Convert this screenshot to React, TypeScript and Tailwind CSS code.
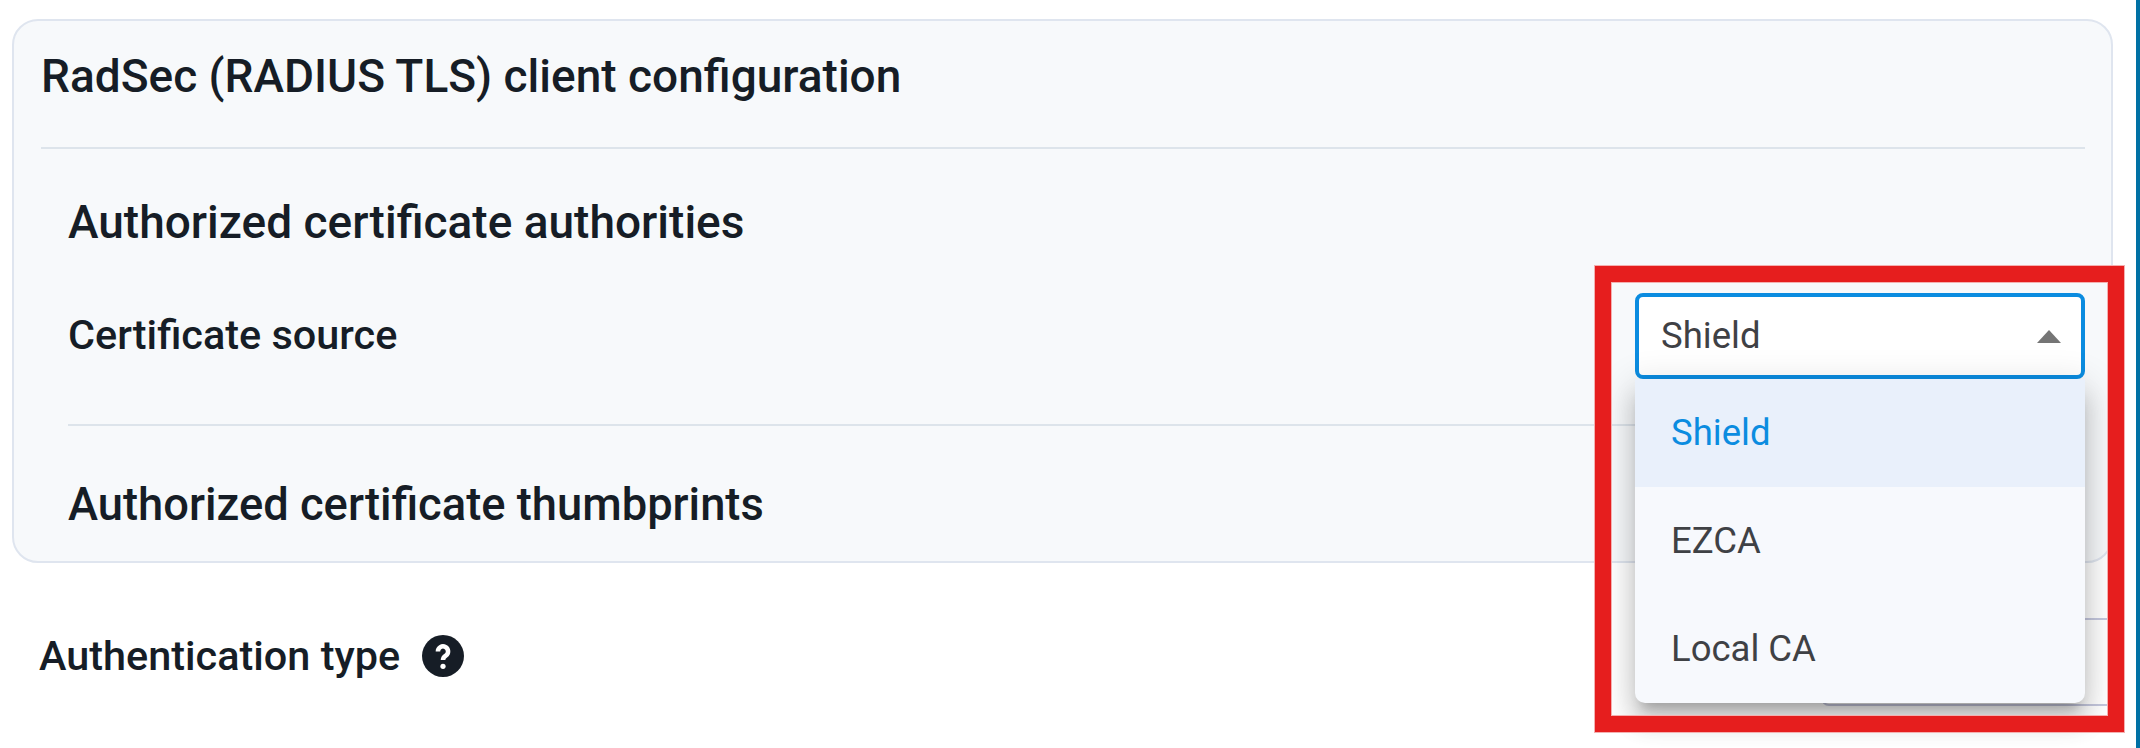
const options = ['Shield', 'EZCA', 'Local CA']

// Open source dropdown, lies over the rows below it
function SourceMenu() {
  return (
    <ul className="absolute left-0 top-full z-20 w-[450px] overflow-hidden rounded-b-[10px] bg-[#f7f9fd] text-[36.5px] text-[#3f4145] shadow-[0_12px_12px_-7px_rgba(0,0,0,0.2),0_20px_25px_2px_rgba(0,0,0,0.14),0_7px_35px_5px_rgba(0,0,0,0.12)]">
      {options.map((option, i) => (
        <li
          key={option}
          className={`flex h-[108px] items-center pl-[36px] ${i === 0 ? 'bg-[#e9f0fb] text-[#0b8ce0]' : ''}`}
        >
          {option}
        </li>
      ))}
    </ul>
  )
}

function HelpIcon() {
  return (
    <svg width="42" height="42" viewBox="0 0 24 24" className="shrink-0">
      <circle cx="12" cy="12" r="12" fill="#161d26" />
      <path
        d="M9.1 9.4a2.9 2.9 0 1 1 4.5 2.4c-1.1.7-1.6 1.2-1.6 2.5"
        fill="none"
        stroke="#fff"
        strokeWidth="2.6"
      />
      <circle cx="12" cy="17.9" r="1.5" fill="#fff" />
    </svg>
  )
}

export default function App() {
  return (
    <div className="flex h-[748px] w-full overflow-hidden bg-white font-['Roboto',sans-serif] text-[#161d26]">
      <main className="relative flex-1 pl-[12px] pr-[23px] pt-[19px]">
        <section className="h-[544px] rounded-[26px] border-2 border-[#dfe5ef] bg-[#f7f9fb] px-[27px] pr-[26px]">
          <div className="flex h-[128px] items-center border-b-2 border-[#dde4eb] pb-[16px]">
            <h2 className="text-[46px] font-medium">RadSec (RADIUS TLS) client configuration</h2>
          </div>
          <div className="pl-[27px]">
            <div className="border-b-2 border-[#dde4eb]">
              <h3 className="flex h-[106px] items-center pt-[40px] text-[46px] font-medium">
                Authorized certificate authorities
              </h3>
              <div className="flex items-center justify-between pt-[38px] pb-[45px]">
                <label className="pb-[2px] text-[41.4px] font-medium">Certificate source</label>
                <div className="relative w-[450px]">
                  <div className="flex h-[86px] items-center justify-between rounded-[8px] border-[4px] border-[#0b8ce0] bg-white pl-[22px] pr-[20px] text-[36.5px] text-[#3f4145]">
                    <span>Shield</span>
                    <svg width="24" height="13" viewBox="0 0 24 13" className="fill-[#757575]">
                      <path d="M12 0 24 13H0z" />
                    </svg>
                  </div>
                  <SourceMenu />
                </div>
              </div>
            </div>
            <h3 className="pt-[54px] text-[45.3px] font-medium leading-[50px]">Authorized certificate thumbprints</h3>
          </div>
        </section>

        <div className="mt-[55px] flex items-center justify-between pl-[27px]">
          <div className="flex items-center gap-[22px] pb-[12px]">
            <span className="text-[41.4px] font-medium">Authentication type</span>
            <HelpIcon />
          </div>
          <div className="-mr-[2px] h-[88px] w-[294px] rounded-[8px] border-2 border-[#c5c8de] bg-white" />
        </div>

        {/* Annotation box drawn over the screenshot */}
        <div className="absolute left-[1595px] top-[266px] z-30 h-[466px] w-[529px] border-[16px] border-[#e61e1e] shadow-[inset_0_0_0_1px_#f4b0b0] outline-1 outline-[#f4b0b0]" />
      </main>
      <div className="w-[4px] bg-[#0071a5]" />
    </div>
  )
}
